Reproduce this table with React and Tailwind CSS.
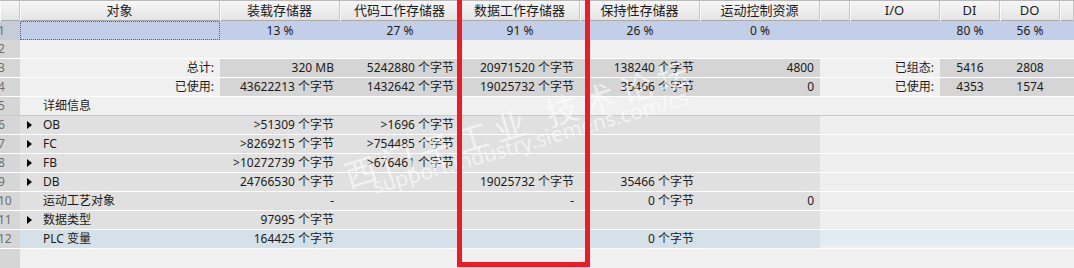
import React from 'react';

const GRID = 'grid grid-cols-[20px_200px_120px_120px_120px_120px_120px_30px_90px_60px_60px_14px]';
const ROW = `${GRID} h-[19px] border-b border-white`;

const HEAD = ['', '对象', '装载存储器', '代码工作存储器', '数据工作存储器', '保持性存储器', '运动控制资源', '', 'I/O', 'DI', 'DO', ''];

const DETAILS = [
  { n: 6, tri: true, name: 'OB', load: '>51309 个字节', code: '>1696 个字节' },
  { n: 7, tri: true, name: 'FC', load: '>8269215 个字节', code: '>754485 个字节' },
  { n: 8, tri: true, name: 'FB', load: '>10272739 个字节', code: '>676461 个字节' },
  { n: 9, tri: true, name: 'DB', load: '24766530 个字节', data: '19025732 个字节', ret: '35466 个字节' },
  { n: 10, name: '运动工艺对象', load: '-', data: '-', ret: '0 个字节', motion: '0' },
  { n: 11, tri: true, name: '数据类型', load: '97995 个字节' },
  { n: 12, name: 'PLC 变量', load: '164425 个字节', ret: '0 个字节', hl: true },
];

function Num({ n, className = 'bg-[#d6d6d6]' }) {
  return (
    <div className={`flex items-center text-[#6e6e6e] ${className}`}>
      <span className="-ml-[2px]">{n}</span>
    </div>
  );
}

function Cell({ children, className = '' }) {
  return (
    <div className={`flex items-center justify-end pr-[6px] whitespace-nowrap overflow-hidden ${className}`}>
      {children}
    </div>
  );
}

function Triangle() {
  return (
    <svg width="5" height="8" viewBox="0 0 5 8" className="block">
      <path d="M0 0 L5 4 L0 8 Z" fill="#000" />
    </svg>
  );
}

export default function App() {
  return (
    <div
      className="relative w-[1074px] h-[268px] overflow-hidden bg-[#f0f0f0] text-[12px] text-[#1b1b1b]"
      style={{ fontFamily: '"Noto Sans", "Noto Sans CJK SC", sans-serif' }}
    >
      {/* header */}
      <div className={`${GRID} h-[21px] border-t border-[#b9b9b9] border-b border-b-[#a9a9a9] bg-gradient-to-b from-[#f7f7f7] to-[#e4e4e4] text-[13px]`}>
        {HEAD.map((h, i) => (
          <div key={i} className="flex items-center justify-center border-r border-[#c6c6c6] shadow-[inset_1px_0_0_#fbfbfb] whitespace-nowrap">
            {h}
          </div>
        ))}
      </div>

      {/* row 1: usage percentages */}
      <div className={`${GRID} h-[19px] bg-[#c2cfe8]`}>
        <Num n="1" className="bg-[#c6cdd8]" />
        <div className="border border-dotted border-[#2f5fd0]" />
        {['13 %', '27 %', '91 %', '26 %', '0 %', '', '', '80 %', '56 %', ''].map((v, i) => (
          <div key={i} className="flex items-center justify-center whitespace-nowrap">{v}</div>
        ))}
      </div>

      {/* row 2 */}
      <div className={ROW}>
        <Num n="2" />
      </div>

      {/* row 3 & 4: totals */}
      {[
        { n: 3, label: '总计:', vals: ['320 MB', '5242880 个字节', '20971520 个字节', '138240 个字节', '4800'], io: '已组态:', di: '5416', do: '2808' },
        { n: 4, label: '已使用:', vals: ['43622213 个字节', '1432642 个字节', '19025732 个字节', '35466 个字节', '0'], io: '已使用:', di: '4353', do: '1574' },
      ].map((r) => (
        <div key={r.n} className={ROW}>
          <Num n={r.n} />
          <Cell>{r.label}</Cell>
          {r.vals.map((v, i) => (
            <Cell key={i} className="bg-[#d5d5d5]">{v}</Cell>
          ))}
          <Cell className="col-span-2">{r.io}</Cell>
          <div className="flex items-center justify-center bg-[#d5d5d5]">{r.di}</div>
          <div className="flex items-center justify-center bg-[#d5d5d5]">{r.do}</div>
          <div className="bg-[#d5d5d5]" />
        </div>
      ))}

      {/* row 5 */}
      <div className={`${GRID} h-[19px] border-b border-[#c9c9c9]`}>
        <Num n="5" />
        <div className="flex items-center pl-[23px] whitespace-nowrap">详细信息</div>
      </div>

      {/* detail rows */}
      {DETAILS.map((d) => {
        const bg = d.hl ? 'bg-[#d5e1e8]' : 'bg-[#e0e0e0]';
        return (
          <div key={d.n} className={ROW}>
            <Num n={d.n} />
            <div className={`flex items-center pl-[7px] whitespace-nowrap ${bg}`}>
              <div className="w-[16px]">{d.tri && <Triangle />}</div>
              <span>{d.name}</span>
            </div>
            <Cell className={bg}>{d.load}</Cell>
            <Cell className={bg}>{d.code}</Cell>
            <Cell className={bg}>{d.data}</Cell>
            <Cell className={bg}>{d.ret}</Cell>
            <Cell className={bg}>{d.motion}</Cell>
            <div className="col-span-5 bg-[#efefef]">
              {d.hl && <div className="h-[15px] bg-[#e0ebf2]" />}
            </div>
          </div>
        );
      })}

      {/* empty area below */}
      <div className={`${GRID} h-[19px]`}>
        <div className="bg-[#d6d6d6]" />
      </div>

      {/* watermark */}
      <div className="pointer-events-none absolute left-[350px] top-[160px] origin-bottom-left -rotate-[17deg] whitespace-nowrap text-[32px] leading-none tracking-[7px] text-white/60">
        西门子工业 技术论坛
      </div>
      <div className="pointer-events-none absolute left-[376px] top-[176px] origin-bottom-left -rotate-[16deg] whitespace-nowrap text-[21px] leading-none text-white/60">
        support.industry.siemens.com/cs
      </div>

      {/* red annotation box */}
      <div className="pointer-events-none absolute left-[457px] top-[-6px] w-[133px] h-[273px] border-[5px] border-[#ec1c24]" />
    </div>
  );
}
